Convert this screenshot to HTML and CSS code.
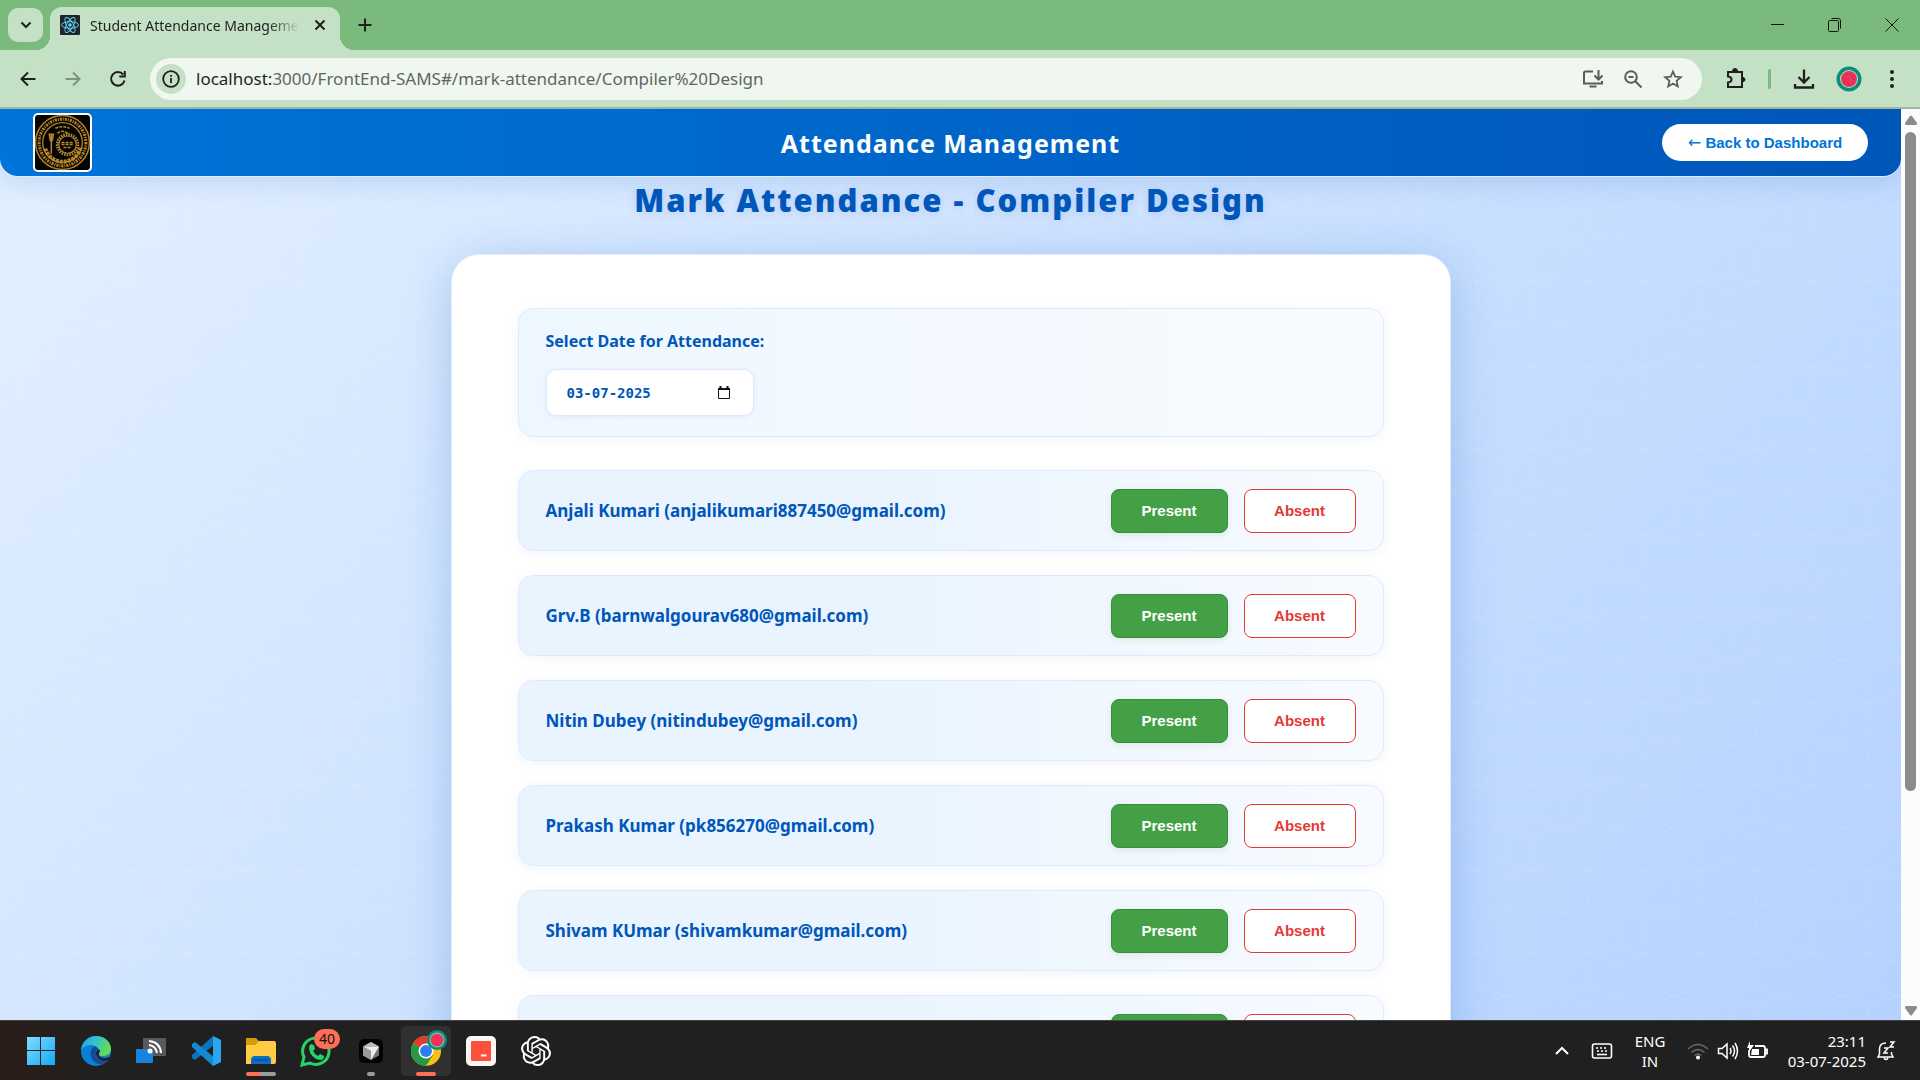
FILE: index.html
```html
<!DOCTYPE html>
<html lang="en">
<head>
<meta charset="utf-8">
<meta name="viewport" content="width=device-width, initial-scale=1">
<title>Student Attendance Management</title>
<link rel="stylesheet" href="styles.css">
</head>
<body>
<div class="screen">
  <div class="tabstrip">
    <button class="tab-search" aria-label="Search tabs"><svg width="20" height="20" viewBox="0 0 20 20" fill="none" stroke="#1f1f1f" stroke-width="2"><path d="M5.500 7.500l4.500 4.500 4.500-4.500"/></svg></button>
    <div class="tab">
      <svg width="20" height="20" viewBox="0 0 20 20"><rect width="20" height="20" rx="1" fill="#20232a"/><g fill="none" stroke="#61dafb" stroke-width=".9"><ellipse cx="10" cy="10" rx="8.500" ry="3.300"/><ellipse cx="10" cy="10" rx="8.500" ry="3.300" transform="rotate(60 10 10)"/><ellipse cx="10" cy="10" rx="8.500" ry="3.300" transform="rotate(120 10 10)"/></g><circle cx="10" cy="10" r="1.700" fill="#61dafb"/></svg>
      <span class="tab-title">Student Attendance Management</span>
      <button class="plain" aria-label="Close tab"><svg width="20" height="20" viewBox="0 0 20 20" stroke="#1f1f1f" stroke-width="2"><path d="M5.500 5.500l9 9M14.500 5.500l-9 9"/></svg></button>
    </div>
    <button class="plain new-tab" aria-label="New tab"><svg width="20" height="20" viewBox="0 0 20 20" stroke="#1f1f1f" stroke-width="2"><path d="M10 3.500v13M3.500 10h13"/></svg></button>
    <div class="window-buttons">
      <button class="plain" aria-label="Minimize"><svg width="16" height="16" viewBox="0 0 16 16" stroke="#111"><path d="M1 7.500h13"/></svg></button>
      <button class="plain" aria-label="Restore"><svg width="16" height="16" viewBox="0 0 16 16" fill="none" stroke="#111"><rect x="1.500" y="3.500" width="10" height="11" rx="1"/><path d="M4.500 1.500h7q2 0 2 2v8"/></svg></button>
      <button class="plain" aria-label="Close"><svg width="16" height="16" viewBox="0 0 16 16" stroke="#111"><path d="M1.500 1.500l13 13M14.500 1.500l-13 13"/></svg></button>
    </div>
  </div>

  <div class="toolbar">
    <div class="nav-buttons">
      <button class="plain" aria-label="Back"><svg width="20" height="20" viewBox="0 0 20 20" fill="none" stroke="#1f1f1f" stroke-width="2"><path d="M17.500 10H4M10 3.500L3.500 10l6.500 6.500"/></svg></button>
      <button class="plain" aria-label="Forward" disabled><svg width="20" height="20" viewBox="0 0 20 20" fill="none" stroke="#809282" stroke-width="2"><path d="M2.500 10H16M10 3.500l6.500 6.500-6.500 6.500"/></svg></button>
      <button class="plain" aria-label="Reload"><svg width="20" height="20" viewBox="0 0 20 20" fill="none" stroke="#1f1f1f" stroke-width="2"><path d="M16.500 11.500A6.800 6.800 0 1 1 15.200 5.500M16.800 2v5.500h-5.500"/></svg></button>
    </div>
    <div class="omnibox">
      <button class="site-info" aria-label="Site information"><svg width="20" height="20" viewBox="0 0 20 20" fill="none" stroke="#1f1f1f" stroke-width="1.800"><circle cx="10" cy="10" r="7.800"/><path d="M10 9v5M10 6v1.800"/></svg></button>
      <div class="url"><span class="host">localhost:</span>3000/FrontEnd-SAMS#/mark-attendance/Compiler%20Design</div>
      <div class="omni-icons">
        <button class="plain" aria-label="Install"><svg width="22" height="20" viewBox="0 0 22 20" fill="none" stroke="#565e58" stroke-width="2"><path d="M11 2.500H3.500a1.500 1.500 0 0 0-1.500 1.500v10.500h18V12M7.500 17.500h7" /><path d="M16.500 1v9M12.500 6.500l4 4 4-4"/></svg></button>
        <button class="plain" aria-label="Zoom"><svg width="20" height="20" viewBox="0 0 20 20" fill="none" stroke="#565e58" stroke-width="2"><circle cx="8" cy="8" r="5.800"/><path d="M12.500 12.500l6 6M5.500 8h5"/></svg></button>
        <button class="plain" aria-label="Bookmark"><svg width="22" height="20" viewBox="0 0 22 20" fill="none" stroke="#565e58" stroke-width="1.800"><path d="M11 2.500l2.200 5.200 5.600.5-4.200 3.700 1.200 5.500-4.800-2.900-4.800 2.900 1.200-5.500-4.200-3.700 5.600-.5z"/></svg></button>
      </div>
    </div>
    <div class="tool-icons">
      <button class="plain" aria-label="Extensions"><svg width="24" height="24" viewBox="0 0 24 24" fill="none" stroke="#1f1f1f" stroke-width="2"><path d="M4 5h14v15H4v-4.500q3.500-.3 3.500-3T4 9.500z"/><path d="M8.500 4a2.500 2.500 0 0 1 5 0zM19 10.500a2 2 0 0 1 0 4z" fill="#1f1f1f" stroke-width="1"/></svg></button>
      <span class="divider"></span>
      <button class="plain" aria-label="Downloads"><svg width="24" height="24" viewBox="0 0 24 24" fill="none" stroke="#1f1f1f" stroke-width="2.300"><path d="M12 2.500v13M6.500 10l5.500 5.500L17.500 10M3 17v3.500h18V17"/></svg></button>
      <button class="plain" aria-label="Profile"><svg width="26" height="26" viewBox="0 0 26 26"><circle cx="13" cy="13" r="12.500" fill="#06907a"/><circle cx="13" cy="13" r="9" fill="#b3e5c5"/><circle cx="13" cy="13" r="8" fill="#f0325b"/><circle cx="13" cy="13" r="5" fill="none" stroke="#7c2c3c" stroke-dasharray="1 3"/></svg></button>
      <button class="plain" aria-label="Menu"><svg width="20" height="20" viewBox="0 0 20 20" fill="#1f1f1f"><circle cx="10" cy="3" r="2"/><circle cx="10" cy="10" r="2"/><circle cx="10" cy="17" r="2"/></svg></button>
    </div>
  </div>

  <div class="viewport">
    <div class="page">
      <header class="page-header">
        <svg class="logo" viewBox="0 0 58 58" role="img" aria-label="College seal"><rect x="1" y="1" width="56" height="56" rx="4" fill="#050505" stroke="#fff" stroke-width="2"/><g fill="none" stroke="#b58628"><circle cx="29" cy="29" r="26.500" stroke-width="1.500"/><circle cx="29" cy="29" r="23" stroke-width="3" stroke-dasharray="2 1 1 1"/><circle cx="29" cy="29" r="19.500" stroke-width="1.300"/><path d="M12 35a18 18 0 0 0 35-2" stroke-width="4" stroke-dasharray="3 1"/><circle cx="34" cy="31" r="10" stroke-width="3" stroke-dasharray="1.500 1"/><circle cx="34" cy="31" r="8.500"/><path d="M18 21v19M16 21h4l-1 6h-2z" stroke-width="1.500"/><path d="M22 15q7-3 14 0M24 20q5-4 10 0M28 29h12M28 31h12M30 34h8" stroke-width="1.500" stroke-dasharray="3 1"/></g></svg>
        <h1>Attendance Management</h1>
        <button class="back"><span class="arrow">←</span> Back to Dashboard</button>
      </header>
      <main>
        <h2>Mark Attendance - Compiler Design</h2>
        <section class="card">
          <div class="date-box">
            <label for="date">Select Date for Attendance:</label>
            <div class="date-field">
              <input id="date" type="text" value="03-07-2025">
              <svg width="14" height="14" viewBox="0 0 14 14" fill="none" stroke="#111"><path d="M1.500 2.500h11v10h-11z"/><path d="M1 3h12M3.500 0v3M10.500 0v3" stroke-width="2"/></svg>
            </div>
          </div>
          <ul class="students">
            <li><span>Anjali Kumari (anjalikumari887450@gmail.com)</span><button class="present">Present</button><button class="absent">Absent</button></li>
            <li><span>Grv.B (barnwalgourav680@gmail.com)</span><button class="present">Present</button><button class="absent">Absent</button></li>
            <li><span>Nitin Dubey (nitindubey@gmail.com)</span><button class="present">Present</button><button class="absent">Absent</button></li>
            <li><span>Prakash Kumar (pk856270@gmail.com)</span><button class="present">Present</button><button class="absent">Absent</button></li>
            <li><span>Shivam KUmar (shivamkumar@gmail.com)</span><button class="present">Present</button><button class="absent">Absent</button></li>
            <li><span></span><button class="present" aria-label="Present"></button><button class="absent" aria-label="Absent"></button></li>
          </ul>
        </section>
      </main>
    </div>
    <div class="scrollbar">
      <svg width="12" height="10" viewBox="0 0 12 10" fill="#8b8b8b"><path d="M5 1q1-1 2 0l5 7q0 2-1 2H1q-1 0-1-2z"/></svg>
      <div class="track"><div class="thumb"></div></div>
      <svg width="12" height="10" viewBox="0 0 12 10" fill="#8b8b8b"><path d="M5 9q1 1 2 0l5-7q0-2-1-2H1q-1 0-1 2z"/></svg>
    </div>
  </div>

  <div class="taskbar">
    <div class="apps">
      <button class="app" aria-label="Start"><svg width="30" height="30" viewBox="0 0 30 30"><defs><linearGradient id="win" x2="1" y2="1"><stop stop-color="#7fdcff"/><stop offset="1" stop-color="#14a9f5"/></linearGradient></defs><path fill="url(#win)" d="M1 1h13v13H1zM15 1h14v13H15zM1 15h13v14H1zM15 15h14v14H15z"/></svg></button>
      <button class="app" aria-label="Edge"><svg width="30" height="30" viewBox="0 0 30 30"><defs><linearGradient id="edge" x2="1" y2=".4"><stop stop-color="#1b9de2"/><stop offset=".5" stop-color="#35c1d0"/><stop offset="1" stop-color="#62dd55"/></linearGradient></defs><circle cx="15" cy="15" r="15" fill="#0b7fd8"/><path d="M0 14C1 5 8 0 15 0c9 0 15 6 15 13 0 5-4 7-8 7-3 0-5-1-4-3 2-4-2-7-7-8-5 0-9 2-11 5z" fill="url(#edge)"/><path d="M12 11c-5 6-2 14 5 17 5 1 9-1 12-5-7 3-15 0-14-6 0-2 1-3 2-4-1-2-3-3-5-2z" fill="#134d96"/><path d="M19 14c0 2-2 4-1 6 3 3 8 2 10 1l2 1-1 2c-6 2-13 0-14-6 0-3 2-5 4-4z" fill="#202020"/></svg></button>
      <button class="app" aria-label="Cast"><svg width="30" height="30" viewBox="0 0 30 30"><rect x="7" y="2" width="23" height="18" rx="1" fill="#57595c"/><rect y="13" width="17" height="14" rx="1" fill="#1684dc"/><g fill="none" stroke="#fff" stroke-width="2"><path d="M13 9q7 1 8 8M13 5q11 1 12 12"/></g><circle cx="14" cy="15" r="2.500" fill="#fff"/></svg></button>
      <button class="app" aria-label="Visual Studio Code"><svg width="30" height="30" viewBox="0 0 30 30"><path d="M22 0L1 19v3l3 2L23 9z" fill="#0876b9"/><path d="M22 30L1 11V8l3-2 19 15z" fill="#1589d2"/><path d="M22 0l8 4v22l-8 4z" fill="#2ba7f0"/></svg></button>
      <button class="app" aria-label="File Explorer"><svg width="30" height="30" viewBox="0 0 30 30"><path d="M0 2h10l3 3h15v12H0z" fill="#d89908"/><path d="M0 9h9l4-4h15q2 0 2 2v19q0 2-2 2H0z" fill="#fecb43"/><path d="M5 28v-4q0-4 4-4h12q4 0 4 4v4z" fill="#0c6ec2"/><path d="M8 24h14" stroke="#084e93" stroke-width="1.500"/></svg><i class="ind split"></i></button>
      <button class="app" aria-label="WhatsApp"><svg width="32" height="32" viewBox="0 0 32 32"><path d="M2 30l2-8A13.200 13.200 0 1 1 10 28z" fill="none" stroke="#25d366" stroke-width="3"/><path d="M11 9l3 1 1 4-2 2q2 4 5 5l2-2 4 2q0 4-4 4Q10 23 9 13q0-3 2-4z" fill="#25d366"/></svg><b class="badge">40</b></button>
      <button class="app" aria-label="Cursor"><svg width="24" height="24" viewBox="0 0 24 24"><rect width="24" height="24" rx="5" fill="#030303"/><path d="M12 3l8 4.500v9L12 21l-8-4.500v-9z" fill="#777"/><path d="M4 7.500h16L12 21v-9z" fill="#eee"/><path d="M4 7.500l8 4.500v9l-8-4.500z" fill="#999"/><path d="M12 3l8 4.500H4z" fill="#bbb"/></svg><i class="ind dot"></i></button>
      <button class="app active" aria-label="Chrome"><svg width="36" height="36" viewBox="0 0 36 36"><circle cx="15" cy="21" r="15" fill="#fbc116"/><path d="M15 21L2 13.500A15 15 0 0 1 28 13.500H15z" fill="#e33b2e"/><path d="M2 13.500A15 15 0 0 0 15 36l7-11z" fill="#279847"/><circle cx="15" cy="21" r="7.500" fill="#fff"/><circle cx="15" cy="21" r="6" fill="#2f7def"/><circle cx="26" cy="10" r="10" fill="#06907a"/><circle cx="26" cy="10" r="7.500" fill="#7cc3aa"/><circle cx="26" cy="10" r="6.300" fill="#f0325b"/></svg><i class="ind wide"></i></button>
      <button class="app" aria-label="Recorder"><svg width="30" height="30" viewBox="0 0 30 30"><rect width="30" height="30" rx="5" fill="#faf6f4"/><rect x="5" y="5" width="20" height="20" rx="1" fill="#ff503d"/><path d="M15 19.500h5.500" stroke="#fff" stroke-width="2"/></svg></button>
      <button class="app" aria-label="ChatGPT"><svg width="30" height="30" viewBox="0 0 24 24" fill="#fff"><path d="M22.282 9.821a5.985 5.985 0 0 0-.516-4.910 6.046 6.046 0 0 0-6.510-2.900A6.065 6.065 0 0 0 4.981 4.182a5.985 5.985 0 0 0-3.998 2.900 6.046 6.046 0 0 0 .743 7.097 5.980 5.980 0 0 0 .510 4.911 6.051 6.051 0 0 0 6.515 2.900A5.985 5.985 0 0 0 13.260 24a6.056 6.056 0 0 0 5.772-4.206 5.990 5.990 0 0 0 3.998-2.900 6.056 6.056 0 0 0-.747-7.073zM13.260 22.430a4.476 4.476 0 0 1-2.876-1.041l.141-.081 4.779-2.758a.795.795 0 0 0 .392-.681v-6.737l2.020 1.169a.071.071 0 0 1 .038.052v5.583a4.504 4.504 0 0 1-4.494 4.494zM3.600 18.304a4.471 4.471 0 0 1-.535-3.014l.142.085 4.783 2.759a.771.771 0 0 0 .781 0l5.843-3.369v2.332a.080.080 0 0 1-.033.062L9.740 19.950a4.499 4.499 0 0 1-6.140-1.646zM2.341 7.896a4.485 4.485 0 0 1 2.366-1.973V11.600a.766.766 0 0 0 .388.676l5.815 3.355-2.020 1.168a.076.076 0 0 1-.071 0l-4.831-2.786A4.504 4.504 0 0 1 2.341 7.872zm16.597 3.855l-5.833-3.387L15.119 7.200a.076.076 0 0 1 .071 0l4.831 2.791a4.494 4.494 0 0 1-.677 8.105v-5.678a.790.790 0 0 0-.406-.667zm2.011-3.023l-.142-.085-4.774-2.782a.776.776 0 0 0-.785 0L9.409 9.230V6.897a.066.066 0 0 1 .028-.061l4.830-2.787a4.499 4.499 0 0 1 6.680 4.660zM8.307 12.863l-2.020-1.164a.080.080 0 0 1-.038-.057V6.074a4.499 4.499 0 0 1 7.376-3.453l-.142.081L8.704 5.460a.795.795 0 0 0-.393.681zm1.098-2.365l2.602-1.500 2.607 1.500v2.999l-2.597 1.500-2.607-1.500z"/></svg></button>
    </div>
    <div class="tray">
      <svg width="16" height="20" viewBox="0 0 16 20" fill="none" stroke="#fff" stroke-width="2"><path d="M2 13l6-6 6 6"/></svg>
      <svg class="keyboard" width="22" height="20" viewBox="0 0 22 20" fill="none" stroke="#fff" stroke-width="1.600"><rect x="1.500" y="3" width="19" height="14" rx="2"/><path d="M5 7h12M6 10h12" stroke-dasharray="2 2"/><path d="M6 13.500h10"/></svg>
      <div class="lang">ENG<br>IN</div>
      <div class="status">
        <svg width="22" height="20" viewBox="0 0 22 20" fill="none" stroke="#686868" stroke-width="1.600"><path d="M1 8q10-9 20 0M4.500 11.500q6.500-6 13 0M7.500 14.500q3.500-3 7 0"/><circle cx="11" cy="16.500" r="2" fill="#fff" stroke="none"/></svg>
        <svg width="22" height="20" viewBox="0 0 22 20" fill="none" stroke="#fff" stroke-width="1.500"><path d="M1.500 7.500H5l5-4.500v14l-5-4.500H1.500zM13 7q2 3 0 6M15.500 4.500q4 5.500 0 11M18 2q5 8 0 16"/></svg>
        <svg width="22" height="20" viewBox="0 0 22 20"><path d="M8 5h8q2 0 2 2v7q0 2-2 2H4q-2 0-2-2V9M18.500 8.500h1.500v4h-1.500" fill="none" stroke="#fff" stroke-width="1.800"/><path d="M5 8h7v6H4zM3 0v4h4L2 11V7H0z" fill="#fff"/></svg>
      </div>
      <div class="clock">23:11<br>03-07-2025</div>
      <svg width="20" height="20" viewBox="0 0 20 20" fill="none" stroke="#fff" stroke-width="1.500"><path d="M10 2Q3.500 2 3.500 8v5L2 16h15l-1.500-3v-2M8 17q2 3 4 0M8 7h4l-4 5h4M14 1h4l-4 5h4"/></svg>
    </div>
  </div>
</div>
</body>
</html>
```
FILE: styles.css
```css
* { box-sizing: border-box; }
html, body { height: 100%; margin: 0; }
body { font-family: "Noto Sans", "Open Sans", sans-serif; overflow: hidden; }
button { font-family: inherit; cursor: pointer; }
svg { display: block; flex: none; }
.screen { height: 100vh; display: flex; flex-direction: column; }
.plain { background: none; border: 0; padding: 0; display: grid; place-items: center; }

/* Browser tabs */
.tabstrip { height: 50px; flex: none; display: flex; background: #7abb7d; padding-left: 8px; }
.tab-search { width: 35px; height: 34px; margin: 8px 7px 0 0; border: 0; border-radius: 10px; background: #c5e1c5; padding: 0; display: grid; place-items: center; }
.tab { position: relative; width: 290px; margin-top: 7px; padding: 0 10px 7px; display: flex; align-items: center; gap: 10px; background: #c5e1c5; border-radius: 12px 12px 0 0; }
.tab::before, .tab::after { content: ""; position: absolute; bottom: 0; width: 14px; height: 14px; }
.tab::before { left: -14px; background: radial-gradient(circle at 0 0, transparent 14px, #c5e1c5 14px); }
.tab::after { right: -14px; background: radial-gradient(circle at 100% 0, transparent 14px, #c5e1c5 14px); }
.tab-title { flex: 1; overflow: hidden; white-space: nowrap; font: 14px "Noto Sans", sans-serif; color: #1f1f1f; mask-image: linear-gradient(to right, #000 85%, transparent); }
.new-tab { width: 50px; }
.window-buttons { margin-left: auto; display: flex; }
.window-buttons button { width: 57px; }

/* Browser toolbar */
.toolbar { height: 59px; flex: none; display: flex; align-items: center; background: #c5e1c5; border-bottom: 2px solid #9fb5a0; }
.nav-buttons { width: 150px; display: flex; gap: 25px; padding-left: 18px; }
.omnibox { flex: 1; height: 42px; border-radius: 21px; background: #f0f7f0; display: flex; align-items: center; padding-left: 6px; }
.site-info { width: 30px; height: 30px; border: 0; padding: 0; border-radius: 50%; background: #c5e1c5; display: grid; place-items: center; }
.url { flex: 1; margin-left: 10px; font: 17px "Noto Sans", sans-serif; color: #5f6660; white-space: nowrap; }
.host { color: #1f1f1f; }
.omni-icons { display: flex; gap: 19px; padding-right: 18px; }
.tool-icons { width: 218px; padding: 0 18px 0 22px; display: flex; align-items: center; justify-content: space-between; }
.divider { width: 3px; height: 20px; border-radius: 2px; background: #7abb7d; }

/* Page */
.viewport { flex: 1; min-height: 0; display: flex; }
.page {
  flex: 1;
  overflow: hidden;
  background:
    url("data:image/svg+xml,%3Csvg xmlns='http://www.w3.org/2000/svg' width='56' height='84' fill='none' stroke='%23fff' stroke-opacity='.1'%3E%3Cpath d='M0 0L28 9L56 0M0 84L28 75L56 84M28 9V75M0 0V33L28 42L0 51V84M56 33L28 42L56 51'/%3E%3C/svg%3E") 49px 47px,
    linear-gradient(135deg, #e3f0ff, #b5d2ff);
}
.page-header { height: 67px; padding: 0 33px; display: grid; grid-template-columns: 1fr auto 1fr; align-items: center; background: linear-gradient(90deg, #0074d9, #0056b9); border-radius: 0 0 18px 18px; box-shadow: 0 1px 0 #e0ecff, 0 6px 28px rgba(0, 86, 185, 0.16); }
.logo { width: 59px; height: 59px; }
.page-header h1 { margin: 0; font-size: 25px; line-height: 36px; font-weight: 700; letter-spacing: 1px; color: #fff; }
.back { justify-self: end; height: 37px; width: 206px; padding: 0; border: 0; border-radius: 19px; background: #fff; color: #0074d9; font: 700 15px "Liberation Sans", Arial, sans-serif; }
.arrow { font: 400 16px "DejaVu Sans", sans-serif; line-height: 16px; }
main { display: flex; flex-direction: column; align-items: center; }
h2 { margin: 0; padding-bottom: 30px; font-size: 31px; line-height: 48px; font-weight: 900; letter-spacing: 2px; color: #0056b9; text-shadow: 0 2px 8px rgba(0, 86, 185, 0.15); }
.card { width: 1000px; max-width: 100%; padding: 53px 66px; border: 1px solid #e0ebff; border-radius: 28px; background: #fff; box-shadow: 0 8px 48px rgba(0, 86, 185, 0.24); }
.date-box { padding: 19px 27px; height: 129px; border: 1px solid #dfeaff; border-radius: 15px; background: linear-gradient(90deg, #eef7ff, #f8fbff); box-shadow: 0 2px 12px rgba(0, 86, 185, 0.06); }
.date-box label { display: block; height: 41px; font-size: 16px; line-height: 26px; font-weight: 700; color: #0056b9; }
.date-field { width: 208px; height: 47px; padding: 0 22px 0 20px; display: flex; align-items: center; border: 1px solid #dfeaff; border-radius: 10px; background: #fff; box-shadow: 0 1px 5px rgba(0, 86, 185, 0.08); }
.date-field input { flex: 1; min-width: 0; padding: 0; border: 0; outline: 0; background: none; color: #0056b9; font: 700 14px "DejaVu Sans Mono", monospace; }
.students { list-style: none; margin: 33px 0 0; padding: 0; display: flex; flex-direction: column; gap: 24px; }
.students li { height: 81px; padding: 0 27px; display: flex; align-items: center; gap: 16px; border: 1px solid #dfeaff; border-radius: 15px; background: linear-gradient(90deg, #e9f4ff 40%, #f8fbff); box-shadow: 0 2px 12px rgba(0, 86, 185, 0.06); }
.students span { flex: 1; font-size: 17px; line-height: 24px; font-weight: 700; color: #0056b9; }
.students button { height: 44px; border-radius: 8px; border: 1px solid; font: 700 15px "Liberation Sans", Arial, sans-serif; }
.students .present { width: 117px; background: #43a047; border-color: #388e3c; color: #fff; box-shadow: 0 2px 6px rgba(67, 160, 71, 0.15); }
.students .absent { width: 112px; background: #fff; border-color: #e53935; color: #e53935; }
.scrollbar { width: 19px; padding: 6px 0 4px; display: flex; flex-direction: column; align-items: center; background: #fcfcfc; }
.track { flex: 1; width: 11px; padding: 7px 0; }
.thumb { height: 76%; border-radius: 6px; background: #8b8b8b; }

/* Taskbar */
.taskbar { height: 60px; flex: none; display: flex; justify-content: space-between; background: linear-gradient(90deg, #2b1d19, #202020 100px); border-top: 1px solid #444; color: #fff; }
.apps { display: flex; align-items: center; gap: 5px; padding-left: 16px; }
.app { position: relative; width: 50px; height: 50px; padding: 0; border: 0; border-radius: 5px; background: none; display: grid; place-items: center; }
.active { background: #303030; }
.active svg { margin: -6px 0 0 5px; }
.ind { position: absolute; bottom: 0; height: 4px; border-radius: 2px; background: #9c9c9c; }
.dot { width: 8px; }
.wide { width: 20px; background: #ff6f57; }
.split { width: 30px; background: linear-gradient(90deg, #ff6f57 14px, #9c9c9c 14px); }
.badge { position: absolute; top: 3px; right: 1px; width: 26px; height: 20px; border-radius: 10px; background: #ff6f57; color: #111; font: 14px/20px "Noto Sans", sans-serif; text-align: center; }
.tray { display: flex; align-items: center; padding-right: 24px; font-size: 15px; line-height: 20px; }
.keyboard { margin-left: 21px; }
.lang { width: 74px; text-align: center; }
.status { display: flex; gap: 8px; }
.clock { width: 97px; margin-right: 10px; text-align: right; }
```
